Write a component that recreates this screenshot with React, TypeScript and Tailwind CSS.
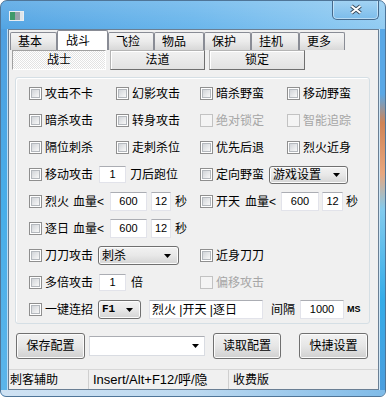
import React from "react";

const Arrow = () => (
    <svg width="7" height="4" viewBox="0 0 7 4" className="shrink-0">
        <path d="M0 0h7L3.5 4z" fill="#000" />
    </svg>
);

const Check = ({ label, disabled = false }: { label: string; disabled?: boolean }) => (
    <div className="flex items-center gap-[3px] whitespace-nowrap">
        {disabled ? (
            <span className="w-[13px] h-[13px] shrink-0 border border-[#c2c2c2] bg-[#f4f4f4]" />
        ) : (
            <span className="w-[13px] h-[13px] shrink-0 flex p-[1px] border border-[#8f8f8f] bg-white">
                <span className="flex-1 border border-[#b4b8bd] bg-gradient-to-br from-[#d2d5d9] to-[#f8f8f8]" />
            </span>
        )}
        <span className={disabled ? "text-[#a6a6a6]" : "text-black"}>{label}</span>
    </div>
);

const Edit = ({
    value,
    className = "",
    left = false,
}: {
    value: string;
    className?: string;
    left?: boolean;
}) => (
    <div
        className={`shrink-0 flex items-center bg-white border border-[#e2e3ea] border-t-[#abadb3] whitespace-pre ${
            left ? "justify-start pl-[2px] text-[12px]" : "justify-center text-[11px]"
        } ${className}`}
    >
        {value}
    </div>
);

const Combo = ({
    label,
    className = "",
    mono = false,
}: {
    label: string;
    className?: string;
    mono?: boolean;
}) => (
    <div
        className={`shrink-0 flex items-center justify-between pl-[3px] pr-[7px] rounded-[3px] border border-[#707070] bg-gradient-to-b from-[#f2f2f2] via-[#e8e8e8] to-[#d4d4d4] shadow-[inset_0_0_0_1px_#fcfcfc] ${
            mono ? "font-['Liberation_Mono',monospace] font-bold text-[11px]" : "text-[12px]"
        } ${className}`}
    >
        <span>{label}</span>
        <Arrow />
    </div>
);

const Button = ({ label, className = "" }: { label: string; className?: string }) => (
    <div
        className={`h-[26px] shrink-0 flex items-center justify-center rounded-[3px] border border-[#707070] bg-gradient-to-b from-[#f2f2f2] via-[#e6e6e6] to-[#d0d0d0] shadow-[inset_0_0_0_1px_#fbfbfb] ${className}`}
    >
        {label}
    </div>
);

const tabs = [
    { label: "基本", w: "w-[47px]" },
    { label: "战斗", w: "w-[51px]", active: true },
    { label: "飞捡", w: "w-[46px]" },
    { label: "物品", w: "w-[50px]" },
    { label: "保护", w: "w-[47px]" },
    { label: "挂机", w: "w-[48px]" },
    { label: "更多", w: "w-[46px]" },
];

const Row = ({ children }: { children: React.ReactNode }) => (
    <div className="h-[27px] flex items-center">{children}</div>
);

export default function App() {
    return (
        <div className="w-[386px] h-[400px] bg-white font-['Liberation_Sans','Noto_Sans_CJK_SC',sans-serif] text-[12px] leading-none text-black">
            <div className="w-[386px] h-[397px] flex flex-col overflow-hidden rounded-t-[7px] rounded-b-[6px] border border-[#4f7598] bg-gradient-to-r from-[#52a4e3] via-[#6ab6ec] to-[#92ccf2]">
                {/* title bar */}
                <div className="h-[28px] flex items-start justify-between bg-gradient-to-b from-white/15 to-transparent">
                    <svg width="15" height="10" viewBox="0 0 15 10" className="mt-[10px] ml-[8px]">
                        <rect x="0" y="0" width="15" height="10" fill="#e9eef2" />
                        <rect x="1" y="1" width="5" height="8" fill="#3f9a6a" />
                        <rect x="6" y="1" width="5" height="8" fill="#9aa3ab" />
                        <rect x="11" y="1" width="3" height="8" fill="#dfe5ea" />
                    </svg>
                    <div className="mr-[6px] -mt-[1px] w-[47px] h-[20px] flex items-center justify-center rounded-b-[5px] border border-t-0 border-[#45698c] bg-gradient-to-b from-[#a6d4f3]/70 to-[#72b6e8]/70 shadow-[inset_0_0_0_1px_rgba(255,255,255,0.45)]">
                        <svg width="14" height="11" viewBox="0 0 14 11">
                            <path d="M2.5 2 L11.5 9 M11.5 2 L2.5 9" stroke="#3a4b5c" strokeWidth="4" />
                            <path d="M2.5 2 L11.5 9 M11.5 2 L2.5 9" stroke="#ffffff" strokeWidth="2" />
                        </svg>
                    </div>
                </div>

                <div className="h-[361px] flex">
                    <div className="w-[7px] bg-gradient-to-b from-[#4f9fe0] via-[#48aee9] to-[#5bb5ea] border-r border-[#bcdcf3]" />

                    {/* client */}
                    <div className="w-[371px] border border-[#6a7f94] bg-[#f0f0f0] flex flex-col">
                        {/* main tabs */}
                        <div className="h-[20px] pl-[1px] flex items-end">
                            {tabs.map((t) =>
                                t.active ? (
                                    <div
                                        key={t.label}
                                        className={`${t.w} h-[20px] pl-[8px] flex items-center bg-white border border-b-0 border-[#898c95] rounded-t-[2px]`}
                                    >
                                        {t.label}
                                    </div>
                                ) : (
                                    <div
                                        key={t.label}
                                        className={`${t.w} h-[18px] pl-[7px] flex items-center bg-gradient-to-b from-[#f4f4f4] via-[#ebebeb] to-[#d8d8d8] border border-b-0 border-[#898c95] rounded-t-[2px]`}
                                    >
                                        {t.label}
                                    </div>
                                )
                            )}
                        </div>

                        {/* sub tabs */}
                        <div className="h-[20px] pl-[3px] flex gap-[4px]">
                            <div className="w-[94px] flex items-center justify-center border border-[#a0a0a0] border-b-white border-r-white bg-[repeating-conic-gradient(#ffffff_0%_25%,#e3e3e3_0%_50%)] bg-[length:2px_2px]">
                                战士
                            </div>
                            <div className="w-[95px] flex items-center justify-center border border-[#b4b4b4] border-b-[#6f6f6f] border-r-[#6f6f6f] bg-gradient-to-b from-[#f1f1f1] to-[#e2e2e2] shadow-[inset_1px_1px_0_#ffffff]">
                                法道
                            </div>
                            <div className="w-[96px] flex items-center justify-center border border-[#b4b4b4] border-b-[#6f6f6f] border-r-[#6f6f6f] bg-gradient-to-b from-[#f1f1f1] to-[#e2e2e2] shadow-[inset_1px_1px_0_#ffffff]">
                                锁定
                            </div>
                        </div>

                        {/* group box */}
                        <div className="mt-[7px] ml-[6px] w-[355px] h-[247px] pt-[2px] pl-[13px] rounded-[3px] border border-[#d5dfe5] shadow-[inset_1px_1px_0_#ffffff]">
                            <Row>
                                <div className="w-[87px] shrink-0"><Check label="攻击不卡" /></div>
                                <div className="w-[84px] shrink-0"><Check label="幻影攻击" /></div>
                                <div className="w-[87px] shrink-0"><Check label="暗杀野蛮" /></div>
                                <Check label="移动野蛮" />
                            </Row>
                            <Row>
                                <div className="w-[87px] shrink-0"><Check label="暗杀攻击" /></div>
                                <div className="w-[84px] shrink-0"><Check label="转身攻击" /></div>
                                <div className="w-[87px] shrink-0"><Check label="绝对锁定" disabled /></div>
                                <Check label="智能追踪" disabled />
                            </Row>
                            <Row>
                                <div className="w-[87px] shrink-0"><Check label="隔位刺杀" /></div>
                                <div className="w-[84px] shrink-0"><Check label="走刺杀位" /></div>
                                <div className="w-[87px] shrink-0"><Check label="优先后退" /></div>
                                <Check label="烈火近身" />
                            </Row>
                            <Row>
                                <div className="w-[171px] shrink-0 flex items-center">
                                    <div className="w-[70px] shrink-0"><Check label="移动攻击" /></div>
                                    <Edit value="1" className="w-[27px] h-[17px]" />
                                    <span className="ml-[4px]">刀后跑位</span>
                                </div>
                                <div className="w-[69px] shrink-0"><Check label="定向野蛮" /></div>
                                <Combo label="游戏设置" className="w-[79px] h-[18px]" />
                            </Row>
                            <Row>
                                <div className="w-[171px] shrink-0 flex items-center">
                                    <div className="w-[44px] shrink-0"><Check label="烈火" /></div>
                                    <span className="w-[37px] shrink-0">血量&lt;</span>
                                    <Edit value="600" className="w-[37px] h-[19px]" />
                                    <Edit value="12" className="ml-[4px] w-[20px] h-[19px]" />
                                    <span className="ml-[4px]">秒</span>
                                </div>
                                <div className="w-[45px] shrink-0"><Check label="开天" /></div>
                                <span className="w-[36px] shrink-0">血量&lt;</span>
                                <Edit value="600" className="w-[38px] h-[19px]" />
                                <Edit value="12" className="ml-[3px] w-[21px] h-[19px]" />
                                <span className="ml-[3px]">秒</span>
                            </Row>
                            <Row>
                                <div className="w-[44px] shrink-0"><Check label="逐日" /></div>
                                <span className="w-[37px] shrink-0">血量&lt;</span>
                                <Edit value="600" className="w-[37px] h-[19px]" />
                                <Edit value="12" className="ml-[4px] w-[20px] h-[19px]" />
                                <span className="ml-[4px]">秒</span>
                            </Row>
                            <Row>
                                <div className="w-[171px] shrink-0 flex items-center">
                                    <div className="w-[69px] shrink-0"><Check label="刀刀攻击" /></div>
                                    <Combo label="刺杀" className="w-[81px] h-[19px]" />
                                </div>
                                <Check label="近身刀刀" />
                            </Row>
                            <Row>
                                <div className="w-[171px] shrink-0 flex items-center">
                                    <div className="w-[70px] shrink-0"><Check label="多倍攻击" /></div>
                                    <Edit value="1" className="w-[27px] h-[17px]" />
                                    <span className="ml-[5px]">倍</span>
                                </div>
                                <Check label="偏移攻击" disabled />
                            </Row>
                            <Row>
                                <div className="w-[69px] shrink-0"><Check label="一键连招" /></div>
                                <Combo label="F1" mono className="w-[43px] h-[19px]" />
                                <Edit value="烈火 |开天 |逐日" left className="ml-[8px] w-[114px] h-[19px]" />
                                <span className="ml-[8px]">间隔</span>
                                <Edit value="1000" className="ml-[5px] w-[44px] h-[19px]" />
                                <span className="ml-[3px] text-[9px] font-bold">MS</span>
                            </Row>
                        </div>

                        {/* buttons */}
                        <div className="mt-[9px] h-[26px] pl-[7px] flex items-center">
                            <Button label="保存配置" className="w-[69px]" />
                            <div className="ml-[4px] w-[116px] h-[20px] flex items-center justify-end pr-[5px] bg-white border border-[#d9dce2] border-t-[#abadb3]">
                                <Arrow />
                            </div>
                            <Button label="读取配置" className="ml-[8px] w-[68px]" />
                            <Button label="快捷设置" className="ml-[18px] w-[69px]" />
                        </div>

                        {/* status bar */}
                        <div className="mt-[10px] h-[20px] flex items-center border-t border-[#d7d7d7]">
                            <div className="w-[79px] pl-[1px] whitespace-nowrap">刺客辅助</div>
                            <div className="w-[1px] h-full bg-[#cfcfcf]" />
                            <div className="w-[139px] pl-[4px] whitespace-nowrap text-[13px]">Insert/Alt+F12/呼/隐</div>
                            <div className="w-[1px] h-full bg-[#cfcfcf]" />
                            <div className="pl-[4px] whitespace-nowrap">收费版</div>
                        </div>
                    </div>

                    <div className="flex-1 border-l border-[#cfe6f6] bg-[linear-gradient(to_bottom,#5aa8e6_0%,#5aa8e6_18%,#d08456_26%,#e8a77f_40%,#82cbee_50%,#35ace8_75%,#4b9ede_100%)]" />
                </div>

                <div className="flex-1 bg-gradient-to-r from-[#cfe2f3] via-[#bcd9f0] to-[#7fbbe8]" />
            </div>
        </div>
    );
}
